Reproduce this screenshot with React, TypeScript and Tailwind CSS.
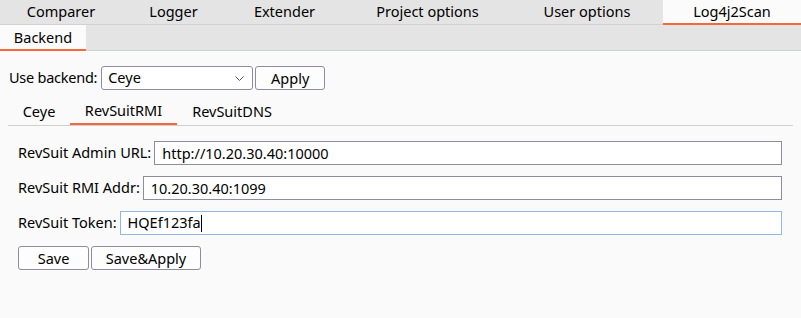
import { useState } from "react";

const topTabs = [
  { name: "Comparer", w: "w-[122px]" },
  { name: "Logger", w: "w-[103px]" },
  { name: "Extender", w: "w-[119px]" },
  { name: "Project options", w: "w-[167px]" },
  { name: "User options", w: "w-[152px]" },
  { name: "Log4j2Scan", w: "w-[138px]" },
];

const subTabs = [
  { name: "Ceye", w: "w-[62px]" },
  { name: "RevSuitRMI", w: "w-[107px]" },
  { name: "RevSuitDNS", w: "w-[110px]" },
];

export default function App() {
  const [active, setActive] = useState("Log4j2Scan");
  const [sub, setSub] = useState("RevSuitRMI");
  const [backend, setBackend] = useState("Ceye");
  const [adminUrl, setAdminUrl] = useState("http://10.20.30.40:10000");
  const [rmiAddr, setRmiAddr] = useState("10.20.30.40:1099");
  const [token, setToken] = useState("HQEf123fa");

  return (
    <div className="w-[801px] h-[318px] bg-[#fafafa] text-[14.5px] text-black overflow-hidden font-['Noto_Sans',sans-serif]">
      {/* Burp top tabs */}
      <div className="flex h-[25px] bg-[#e4e4e4] border-b border-[#ced2d2]">
        {topTabs.map((t) => (
          <div
            key={t.name}
            onClick={() => setActive(t.name)}
            className={`${t.w} shrink-0 flex items-center justify-center leading-none pb-[1px] cursor-default ${
              active === t.name ? "bg-[#fbfbfb] border-b-2 border-[#f4693a] -mb-px" : ""
            }`}
          >
            {t.name}
          </div>
        ))}
      </div>

      {/* extension tabs */}
      <div className="flex h-[26px] bg-[#e4e4e4] border-b border-[#ced2d2]">
        <div className="w-[86px] flex items-center justify-center bg-[#fbfbfb] border-b-2 border-[#f4693a] -mb-px leading-none">
          Backend
        </div>
      </div>

      <div className="pt-[15px] pl-[9px]">
        <div className="flex items-center h-[24px]">
          <span className="mr-[4px] tracking-[-0.25px]">Use backend:</span>
          <div className="relative w-[152px] h-[24px] border border-[#8e8c9e] rounded-[3px] bg-white flex items-center pl-[6px]">
            <span>{backend}</span>
            <select
              className="absolute inset-0 opacity-0"
              value={backend}
              onChange={(e) => setBackend(e.target.value)}
            >
              <option>Ceye</option>
              <option>RevSuitRMI</option>
              <option>RevSuitDNS</option>
            </select>
            <svg className="absolute right-[8px] top-[9px]" width="9" height="6" viewBox="0 0 9 6">
              <path d="M0.5 0.5 L4.5 4.5 L8.5 0.5" fill="none" stroke="#555" strokeWidth="1" />
            </svg>
          </div>
          <button className="ml-[2px] w-[70px] h-[24px] border border-[#8e8c9e] rounded-[3px] bg-[#fdfdfd] leading-none">
            Apply
          </button>
        </div>

        {/* sub tabs */}
        <div className="mt-[8px] mr-[8px] ml-[-1px] flex h-[28px] border-b border-[#d0d0d0]">
          {subTabs.map((t) => (
            <div
              key={t.name}
              onClick={() => setSub(t.name)}
              className={`${t.w} flex items-center justify-center leading-none cursor-default ${
                sub === t.name ? "border-b-2 border-[#f4693a]" : ""
              }`}
            >
              {t.name}
            </div>
          ))}
        </div>

        <div className="pt-[15px] pl-[9px] pr-[19px] flex flex-col gap-[11px]">
          <div className="flex items-center">
            <span className="mr-[3px] whitespace-nowrap">RevSuit Admin URL:</span>
            <input
              className="flex-1 h-[24px] border border-[#8e8c9e] bg-white px-[7px] outline-none"
              value={adminUrl}
              onChange={(e) => setAdminUrl(e.target.value)}
            />
          </div>
          <div className="flex items-center">
            <span className="mr-[3px] whitespace-nowrap">RevSuit RMI Addr:</span>
            <input
              className="flex-1 h-[24px] border border-[#8e8c9e] bg-white px-[7px] outline-none"
              value={rmiAddr}
              onChange={(e) => setRmiAddr(e.target.value)}
            />
          </div>
          <div className="flex items-center">
            <span className="mr-[3px] whitespace-nowrap">RevSuit Token:</span>
            <div className="relative flex-1 h-[24px] border border-[#8fb8e6] bg-white flex items-center px-[7px]">
              <span>{token}</span>
              <span className="w-px h-[17px] bg-black" />
              <input
                className="absolute inset-0 opacity-0"
                value={token}
                onChange={(e) => setToken(e.target.value)}
              />
            </div>
          </div>
          <div className="flex gap-[2px]">
            <button className="w-[71px] h-[24px] border border-[#8e8c9e] rounded-[3px] bg-[#fdfdfd] leading-none">
              Save
            </button>
            <button className="w-[110px] h-[24px] border border-[#8e8c9e] rounded-[3px] bg-[#fdfdfd] leading-none">
              Save&amp;Apply
            </button>
          </div>
        </div>
      </div>
    </div>
  );
}
